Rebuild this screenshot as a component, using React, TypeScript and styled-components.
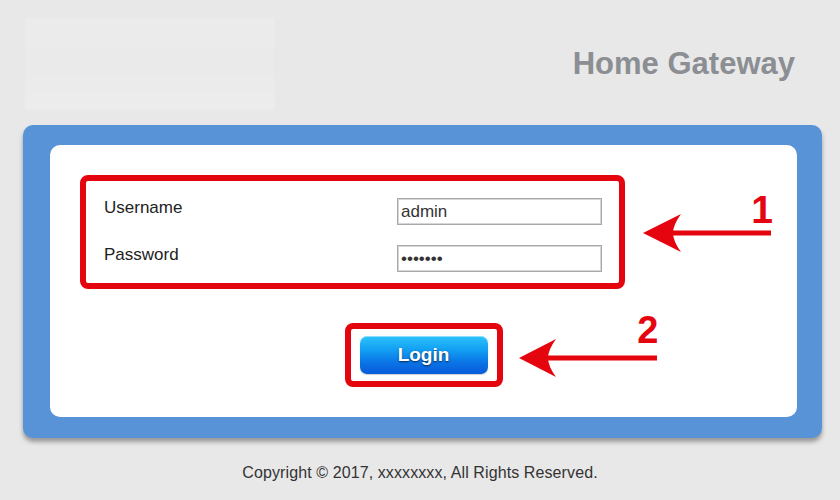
import React from "react";
import styled, { createGlobalStyle } from "styled-components";

const RED = "#e5050f";

const GlobalStyle = createGlobalStyle`
  html, body {
    margin: 0;
    padding: 0;
    background: #e8e8e8;
    font-family: "Liberation Sans", Arial, sans-serif;
  }
`;

const Page = styled.div`
  width: 840px;
  height: 500px;
  background: #e8e8e8;
  overflow: hidden;
`;

const Header = styled.header`
  display: flex;
  align-items: center;
  justify-content: space-between;
  padding: 18px 45px 15px 25px;
`;

const LogoBlur = styled.div`
  width: 250px;
  height: 92px;
  background: linear-gradient(180deg, #ececec 0%, #eaeaea 50%, #ededed 100%);
  filter: blur(1px);
`;

const Title = styled.h1`
  margin: 0;
  font-size: 31px;
  font-weight: bold;
  color: #8b8e92;
`;

const Panel = styled.section`
  margin: 0 18px 0 23px;
  padding: 20px 25px 21px 27px;
  background: #5893d8;
  border-radius: 10px;
  box-shadow: 0 4px 4px rgba(60, 60, 60, 0.45);
`;

const Card = styled.div`
  background: #fff;
  border-radius: 10px;
  padding: 30px;
  display: flex;
  flex-direction: column;
  gap: 34px;
`;

const Marked = styled.div<{ $center?: boolean }>`
  position: relative;
  align-self: ${(p) => (p.$center ? "center" : "flex-start")};
`;

const RedBox = styled.div`
  box-sizing: border-box;
  border: 6px solid ${RED};
  border-radius: 8px;
`;

const FormBox = styled(RedBox)`
  width: 545px;
  padding: 17px 17px 11px 18px;
  display: flex;
  flex-direction: column;
  gap: 20px;
`;

const FieldRow = styled.div`
  display: flex;
  align-items: flex-start;
  justify-content: space-between;
`;

const Label = styled.label`
  font-size: 17px;
  line-height: 20px;
  color: #222;
`;

const Input = styled.input`
  box-sizing: border-box;
  width: 205px;
  height: 27px;
  padding: 0 3px;
  border: 1px solid #a9a9a9;
  box-shadow: inset 0 0 0 1px #d6d6d6;
  font-family: "Liberation Sans", Arial, sans-serif;
  font-size: 17px;
  color: #333;
  background: #fff;
  outline: none;
`;

const ButtonBox = styled(RedBox)`
  padding: 7px 9px;
`;

const LoginButton = styled.button`
  display: block;
  width: 128px;
  height: 38px;
  border: none;
  border-radius: 7px;
  background: linear-gradient(180deg, #2dc3fb 0%, #13a0f3 35%, #0a74e6 70%, #085ad9 100%);
  box-shadow: inset 0 1px 0 rgba(255, 255, 255, 0.45), 0 1px 1px rgba(0, 0, 0, 0.2);
  color: #fff;
  font-family: "Liberation Sans", Arial, sans-serif;
  font-size: 19px;
  font-weight: bold;
  text-shadow: 0 1px 2px rgba(0, 0, 0, 0.65);
  cursor: pointer;
`;

const Callout = styled.div<{ $gap: number; $top: number }>`
  position: absolute;
  left: calc(100% + ${(p) => p.$gap}px);
  top: ${(p) => p.$top}px;
`;

const CalloutNum = styled.span<{ $size: number; $top: number }>`
  position: absolute;
  right: 0;
  top: ${(p) => p.$top}px;
  font-size: ${(p) => p.$size}px;
  line-height: 1;
  font-weight: bold;
  color: ${RED};
`;

const Footer = styled.footer`
  margin-top: 26px;
  text-align: center;
  font-size: 16px;
  color: #333;
  letter-spacing: 0.1px;
`;

function Arrow({ width, head }: { width: number; head: number }) {
  return (
    <svg width={width} height={44} viewBox={`0 0 ${width} 44`}>
      <rect x={head - 10} y={19.5} width={width - head + 8} height={5} fill={RED} />
      <path
        d={`M0 22 L${head} 3 Q${head - 8} 14 ${head - 8} 22 Q${head - 8} 30 ${head} 41 Z`}
        fill={RED}
      />
    </svg>
  );
}

export default function App() {
  return (
    <Page>
      <GlobalStyle />
      <Header>
        <LogoBlur />
        <Title>Home Gateway</Title>
      </Header>
      <Panel>
        <Card>
          <Marked>
            <FormBox>
              <FieldRow>
                <Label htmlFor="user">Username</Label>
                <Input id="user" defaultValue="admin" />
              </FieldRow>
              <FieldRow>
                <Label htmlFor="pass">Password</Label>
                <Input id="pass" type="password" defaultValue="1234567" />
              </FieldRow>
            </FormBox>
            <Callout $gap={18} $top={36}>
              <Arrow width={130} head={38} />
              <CalloutNum $size={39} $top={-21}>1</CalloutNum>
            </Callout>
          </Marked>
          <Marked $center>
            <ButtonBox>
              <LoginButton>Login</LoginButton>
            </ButtonBox>
            <Callout $gap={16} $top={13}>
              <Arrow width={140} head={37} />
              <CalloutNum $size={38} $top={-25}>2</CalloutNum>
            </Callout>
          </Marked>
        </Card>
      </Panel>
      <Footer>Copyright © 2017, xxxxxxxx, All Rights Reserved.</Footer>
    </Page>
  );
}
